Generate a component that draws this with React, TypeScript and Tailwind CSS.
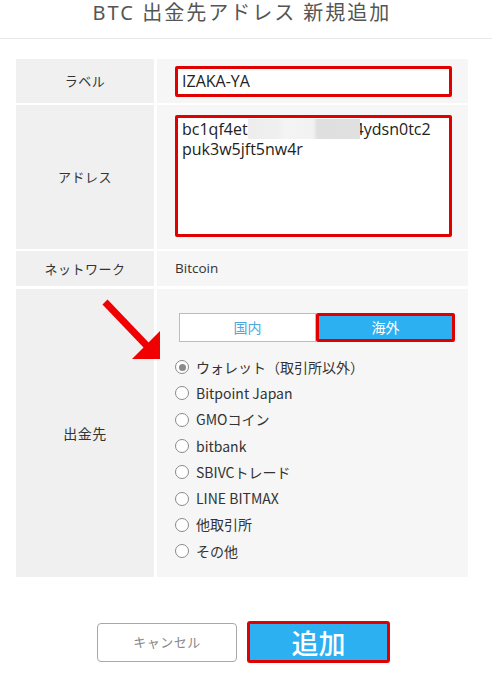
import React from "react";

const radios = [
  "ウォレット（取引所以外）",
  "Bitpoint Japan",
  "GMOコイン",
  "bitbank",
  "SBIVCトレード",
  "LINE BITMAX",
  "他取引所",
  "その他",
];

function Radio({ checked }: { checked?: boolean }) {
  return (
    <span className="w-[14px] h-[14px] rounded-full border-[1.3px] border-[#8a8a8a] bg-white flex items-center justify-center shrink-0">
      {checked && <span className="w-[7px] h-[7px] rounded-full bg-[#8a8a8a]" />}
    </span>
  );
}

export default function App() {
  return (
    <div className="relative w-[492px] h-[673px] bg-white overflow-hidden font-['Noto_Sans','Noto_Sans_CJK_JP',sans-serif] text-[#333]">
      <div className="h-[38px] flex justify-center pr-[8px]">
        <h1 className="text-[20px] leading-[25px] tracking-[2px] text-[#555] font-normal">
          BTC 出金先アドレス 新規追加
        </h1>
      </div>
      <div className="h-px bg-[#e8e8e8]" />

      <div className="ml-[16px] w-[452px] mt-[20px] flex flex-col gap-[2px]">
        {/* Label row */}
        <div className="flex h-[44px] gap-[3px]">
          <div className="w-[138px] bg-[#f0f0f0] flex items-center justify-center text-[13px] tracking-[0.5px] font-['Noto_Sans_CJK_JP',sans-serif]">
            ラベル
          </div>
          <div className="flex-1 bg-[#f6f6f6] pl-[18px] pr-[16px] flex items-center">
            <div className="w-full h-[31px] border-[3px] border-[#e00000] rounded-[2px] bg-white px-[4px] flex items-center text-[16px] text-[#222] font-['Open_Sans','Noto_Sans_CJK_JP',sans-serif]">
              IZAKA-YA
            </div>
          </div>
        </div>

        {/* Address row */}
        <div className="flex h-[144px] gap-[3px]">
          <div className="w-[138px] bg-[#f0f0f0] flex items-center justify-center text-[13px] tracking-[0.5px] font-['Noto_Sans_CJK_JP',sans-serif]">
            アドレス
          </div>
          <div className="flex-1 bg-[#f6f6f6] pl-[18px] pr-[16px] pt-[10px]">
            <div className="w-full h-[122px] border-[3px] border-[#e00000] rounded-[2px] bg-white px-[4px] pt-[1px] text-[16px] leading-[20px] text-[#222] font-['Open_Sans','Noto_Sans_CJK_JP',sans-serif]">
              <div className="flex items-center whitespace-nowrap">
                <span>bc1qf4et</span>
                <span className="relative z-10 inline-block w-[112px] h-[20px] -mr-[5px] bg-[linear-gradient(90deg,#ededed_0%,#efefef_26%,#f4f4f4_33%,#f2f2f2_58%,#dfdfdf_62%,#e0e0e0_100%)]" />
                <span>4ydsn0tc2</span>
              </div>
              <div>puk3w5jft5nw4r</div>
            </div>
          </div>
        </div>

        {/* Network row */}
        <div className="flex h-[35px] gap-[3px]">
          <div className="w-[138px] bg-[#f0f0f0] flex items-center justify-center text-[13px] tracking-[0.5px] font-['Noto_Sans_CJK_JP',sans-serif]">
            ネットワーク
          </div>
          <div className="flex-1 bg-[#f6f6f6] pl-[18px] flex items-center text-[13.5px] font-['Open_Sans',sans-serif]">
            Bitcoin
          </div>
        </div>

        {/* Destination row */}
        <div className="flex h-[288px] gap-[3px] mt-[1px]">
          <div className="w-[138px] bg-[#f0f0f0] flex items-center justify-center text-[14px] tracking-[0.5px] font-['Noto_Sans_CJK_JP',sans-serif]">
            出金先
          </div>
          <div className="flex-1 bg-[#f6f6f6] pl-[18px] pr-[13px] pt-[24px] font-['Noto_Sans_CJK_JP',sans-serif]">
            <div className="ml-[4px] flex h-[29px]">
              <div className="w-[137px] border border-[#8ecbe8] bg-white flex items-center justify-center text-[14px] text-[#4fa6dc]">
                国内
              </div>
              <div className="flex-1 border-[3px] border-[#e00000] rounded-[2px] bg-[#2cb0f2] flex items-center justify-center text-[14px] text-white">
                海外
              </div>
            </div>
            <div className="mt-[12px] flex flex-col">
              {radios.map((r, i) => (
                <div key={r} className="h-[26.3px] flex items-center gap-[7px] text-[14px] text-[#333]">
                  <Radio checked={i === 0} />
                  <span>{r}</span>
                </div>
              ))}
            </div>
          </div>
        </div>
      </div>

      <div className="mt-[44px] pr-[5px] flex justify-center items-center gap-[10px] font-['Noto_Sans_CJK_JP',sans-serif]">
        <button className="w-[140px] h-[39px] rounded-[4px] border border-[#a8a8a8] bg-white text-[13px] text-[#888] tracking-[0.5px]">
          キャンセル
        </button>
        <button className="w-[143px] h-[42px] rounded-[3px] border-[3px] border-[#e00000] bg-[#2cb0f2] text-[27px] leading-none text-white font-medium">
          追加
        </button>
      </div>

      <svg className="absolute left-0 top-0 pointer-events-none" width="492" height="673" viewBox="0 0 492 673">
        <line x1="105" y1="302" x2="148" y2="347" stroke="#f00000" strokeWidth="7" />
        <polygon points="160,331 160,359 132,359" fill="#f00000" />
      </svg>
    </div>
  );
}
